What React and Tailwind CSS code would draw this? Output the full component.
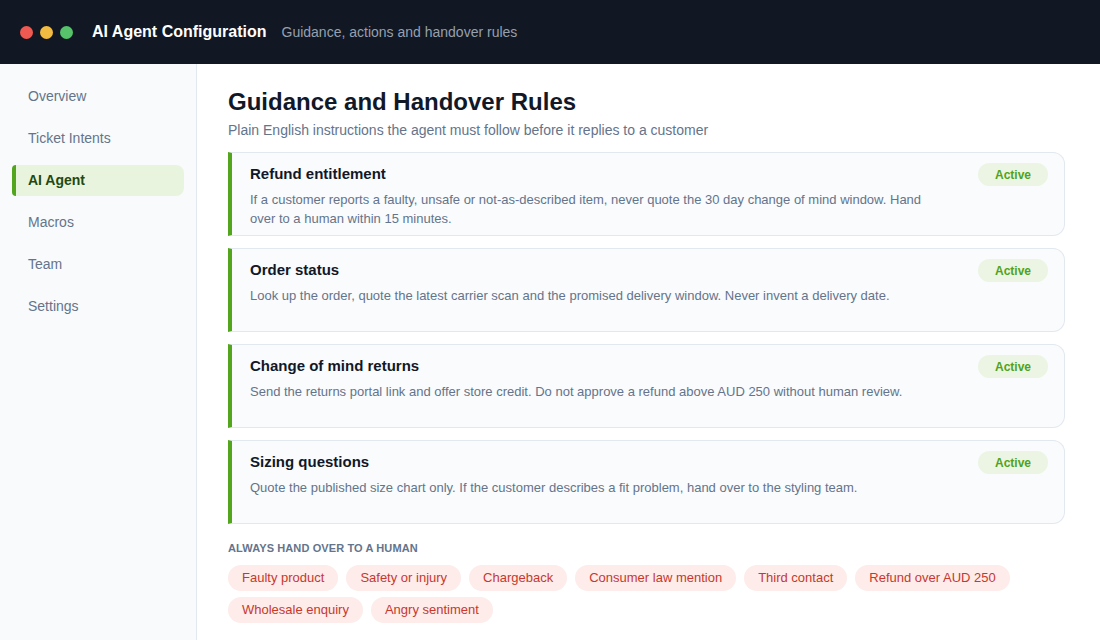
import React from 'react';

// AI Agent Configuration - guidance and handover rules screen

const navItems = ['Overview', 'Ticket Intents', 'AI Agent', 'Macros', 'Team', 'Settings'];

const rules = [
  {
    title: 'Refund entitlement',
    body: 'If a customer reports a faulty, unsafe or not-as-described item, never quote the 30 day change of mind window. Hand over to a human within 15 minutes.',
  },
  {
    title: 'Order status',
    body: 'Look up the order, quote the latest carrier scan and the promised delivery window. Never invent a delivery date.',
  },
  {
    title: 'Change of mind returns',
    body: 'Send the returns portal link and offer store credit. Do not approve a refund above AUD 250 without human review.',
  },
  {
    title: 'Sizing questions',
    body: 'Quote the published size chart only. If the customer describes a fit problem, hand over to the styling team.',
  },
];

const triggers = [
  'Faulty product',
  'Safety or injury',
  'Chargeback',
  'Consumer law mention',
  'Third contact',
  'Refund over AUD 250',
  'Wholesale enquiry',
  'Angry sentiment',
];

export default function App() {
  return (
    <div className="h-[640px] w-[1100px] flex flex-col bg-white font-['Liberation_Sans',Arial,sans-serif] overflow-hidden">
      <header className="h-16 shrink-0 bg-[#111723] flex items-center px-5">
        <div className="flex items-center gap-[7px]">
          <span className="w-[13px] h-[13px] rounded-full bg-[#ee5a52]" />
          <span className="w-[13px] h-[13px] rounded-full bg-[#f2bc42]" />
          <span className="w-[13px] h-[13px] rounded-full bg-[#56c26a]" />
        </div>
        <h1 className="ml-[19px] text-white font-bold text-[16px]">AI Agent Configuration</h1>
        <span className="ml-[15px] text-[#96a0ae] text-[14px]">Guidance, actions and handover rules</span>
      </header>

      <div className="flex flex-1 min-h-0">
        <aside className="w-[197px] shrink-0 bg-[#f8fafc] border-r border-[#e2e8f0] pt-[17px] px-3">
          <nav className="flex flex-col gap-[11px]">
            {navItems.map(item => (
              item === 'AI Agent' ? (
                <div key={item} className="h-[31px] flex items-center rounded-r-lg rounded-l-sm bg-[#e9f4df] border-l-4 border-[#52a51c] pl-3 text-[14px] font-bold text-[#1f4a12]">
                  {item}
                </div>
              ) : (
                <div key={item} className="h-[31px] flex items-center pl-4 text-[14px] text-[#64748b]">
                  {item}
                </div>
              )
            ))}
          </nav>
        </aside>

        <main className="flex-1 pl-[31px] pr-[35px] pt-[23px]">
          <h2 className="text-[24px] font-bold text-[#111827] leading-[30px]">Guidance and Handover Rules</h2>
          <p className="mt-[3px] text-[14px] text-[#64748b] leading-5">Plain English instructions the agent must follow before it replies to a customer</p>

          <div className="mt-[12px] flex flex-col gap-3">
            {rules.map(r => (
              <div key={r.title} className="h-[84px] flex items-start gap-4 rounded-r-xl border border-l-4 border-[#e2e8f0] border-l-[#52a51c] bg-[#f9fbfd] pl-[18px] pr-4 pt-[10px]">
                <div className="flex-1">
                  <div className="text-[15px] font-bold text-[#111827] leading-[22px]">{r.title}</div>
                  <p className="mt-[5px] max-w-[680px] text-[13px] leading-[19px] text-[#64748b]">{r.body}</p>
                </div>
                <span className="h-[23px] px-[17px] flex items-center rounded-full bg-[#ecf5e4] text-[12px] font-bold text-[#4fa31a]">Active</span>
              </div>
            ))}
          </div>

          <div className="mt-[16px] text-[11px] font-bold uppercase text-[#64748b] tracking-[0.01em]">Always hand over to a human</div>
          <div className="mt-[8px] flex flex-wrap gap-x-[8px] gap-y-[6px]">
            {triggers.map(t => (
              <span key={t} className="h-[26px] px-[14px] flex items-center rounded-full bg-[#fdece9] text-[13px] text-[#c8382d]">{t}</span>
            ))}
          </div>
        </main>
      </div>
    </div>
  );
}
